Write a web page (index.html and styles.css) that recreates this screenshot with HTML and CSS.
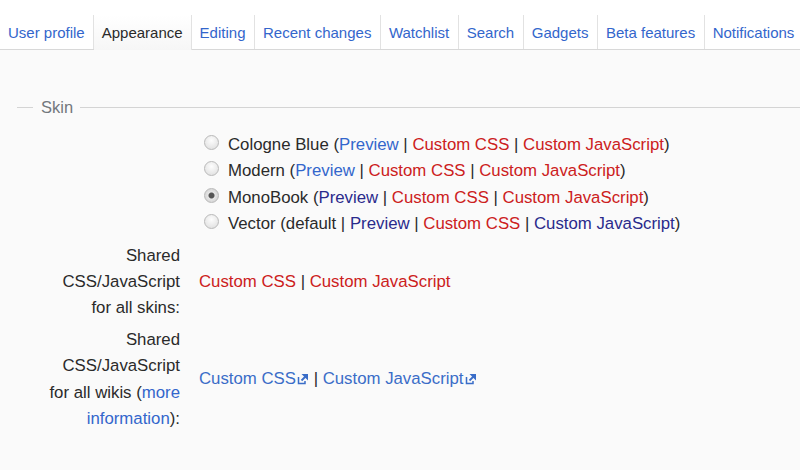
FILE: index.html
```html
<!DOCTYPE html>
<html>
<head>
<meta charset="utf-8">
<link rel="stylesheet" href="styles.css">
</head>
<body>
<div class="page">
  <ul class="tabs">
    <li class="tab"><a href="#">User profile</a></li>
    <li class="tab active"><a href="#">Appearance</a></li>
    <li class="tab"><a href="#">Editing</a></li>
    <li class="tab"><a href="#">Recent changes</a></li>
    <li class="tab"><a href="#">Watchlist</a></li>
    <li class="tab"><a href="#">Search</a></li>
    <li class="tab"><a href="#">Gadgets</a></li>
    <li class="tab"><a href="#">Beta features</a></li>
    <li class="tab"><a href="#">Notifications</a></li>
  </ul>
  <div class="panel">
    <div class="legend"><span class="line short"></span><span class="legend-text">Skin</span><span class="line long"></span></div>
    <div class="form">
      <div class="label"></div>
      <div class="value radios">
        <div class="radio-row"><span class="radio"></span><span>Cologne Blue (<a class="blue" href="#">Preview</a> | <a class="red" href="#">Custom CSS</a> | <a class="red" href="#">Custom JavaScript</a>)</span></div>
        <div class="radio-row"><span class="radio"></span><span>Modern (<a class="blue" href="#">Preview</a> | <a class="red" href="#">Custom CSS</a> | <a class="red" href="#">Custom JavaScript</a>)</span></div>
        <div class="radio-row"><span class="radio checked"></span><span>MonoBook (<a class="visited" href="#">Preview</a> | <a class="red" href="#">Custom CSS</a> | <a class="red" href="#">Custom JavaScript</a>)</span></div>
        <div class="radio-row"><span class="radio"></span><span>Vector (default | <a class="visited" href="#">Preview</a> | <a class="red" href="#">Custom CSS</a> | <a class="visited" href="#">Custom JavaScript</a>)</span></div>
      </div>
      <div class="label gap">Shared CSS/JavaScript for all skins:</div>
      <div class="value gap"><a class="red" href="#">Custom CSS</a> | <a class="red" href="#">Custom JavaScript</a></div>
      <div class="label gap">Shared CSS/JavaScript for all wikis (<a class="blue" href="#">more</a> <a class="blue" href="#">information</a>):</div>
      <div class="value gap"><a class="ext" href="#">Custom CSS<svg class="ext-icon" viewBox="0 0 12 12" width="12" height="12"><path d="M1.5 4v6.5H8V8" fill="none" stroke="currentColor" stroke-width="1.5"/><path d="M4.5 1h6.5v6.5z" fill="currentColor"/><path d="M9.5 2.5L4.5 7.5" stroke="currentColor" stroke-width="1.8"/></svg></a> | <a class="ext" href="#">Custom JavaScript<svg class="ext-icon" viewBox="0 0 12 12" width="12" height="12"><path d="M1.5 4v6.5H8V8" fill="none" stroke="currentColor" stroke-width="1.5"/><path d="M4.5 1h6.5v6.5z" fill="currentColor"/><path d="M9.5 2.5L4.5 7.5" stroke="currentColor" stroke-width="1.8"/></svg></a></div>
    </div>
  </div>
</div>
</body>
</html>
```

FILE: styles.css
```css
html, body {
  margin: 0;
  padding: 0;
  background: #fafafa;
}
body {
  font-family: "Liberation Sans", Arial, sans-serif;
  color: #2a2a2a;
}
a {
  text-decoration: none;
}
.page {
  width: 800px;
  height: 470px;
  overflow: hidden;
  background: #fafafa;
}
.tabs {
  list-style: none;
  margin: 0;
  padding: 15px 0 0 0;
  display: flex;
  background: #fff;
  border-bottom: 1px solid #d8d8d8;
  white-space: nowrap;
}
.tab {
  border-right: 1px solid #e2e2e2;
  background: #fff;
  height: 34px;
  font-size: 15px;
  line-height: 34px;
}
.tab a {
  display: block;
  padding: 1px 8.5px 0 8px;
  color: #3366cc;
}
.tab.active {
  background: linear-gradient(#fff, #f6f6f6);
  margin-bottom: -1px;
  height: 35px;
}
.tab.active a {
  color: #2a2a2a;
  padding: 1px 8px 0 7.5px;
}
.tab:last-child {
  border-right: none;
}
.panel {
  padding: 47px 0 0 17px;
  font-size: 16.8px;
  line-height: 26.4px;
}
.legend {
  display: flex;
  align-items: center;
  height: 20px;
}
.line {
  height: 1px;
  background: #d4d4d4;
}
.line.short {
  width: 16px;
}
.line.long {
  flex: 1;
}
.legend-text {
  color: #72777d;
  padding: 0 7px 0 8px;
  font-size: 16.5px;
}
.form {
  display: grid;
  grid-template-columns: 133px 1fr;
  column-gap: 19px;
  padding: 15px 0 0 30px;
}
.label {
  text-align: right;
}
.gap {
  margin-top: 5px;
}
.value.gap {
  align-self: center;
}
.radios {
  display: flex;
  flex-direction: column;
}
.radio-row {
  display: flex;
  align-items: center;
}
.radio {
  width: 13px;
  height: 13px;
  border-radius: 50%;
  border: 1px solid #b9b9b9;
  background: radial-gradient(circle at 50% 35%, #fdfdfd, #dcdcdc);
  margin: 0 9px 0 5px;
  position: relative;
  top: -3px;
}
.radio.checked {
  background: radial-gradient(circle, #555 0, #555 2.5px, #e6e6e6 3.5px, #d4d4d4 7px);
}
.blue { color: #3366cc; }
.red { color: #cc2020; }
.visited { color: #2a2a8c; }
.ext { color: #3a6dc8; }
.ext-icon {
  vertical-align: -1px;
  margin-left: 1px;
}
```
